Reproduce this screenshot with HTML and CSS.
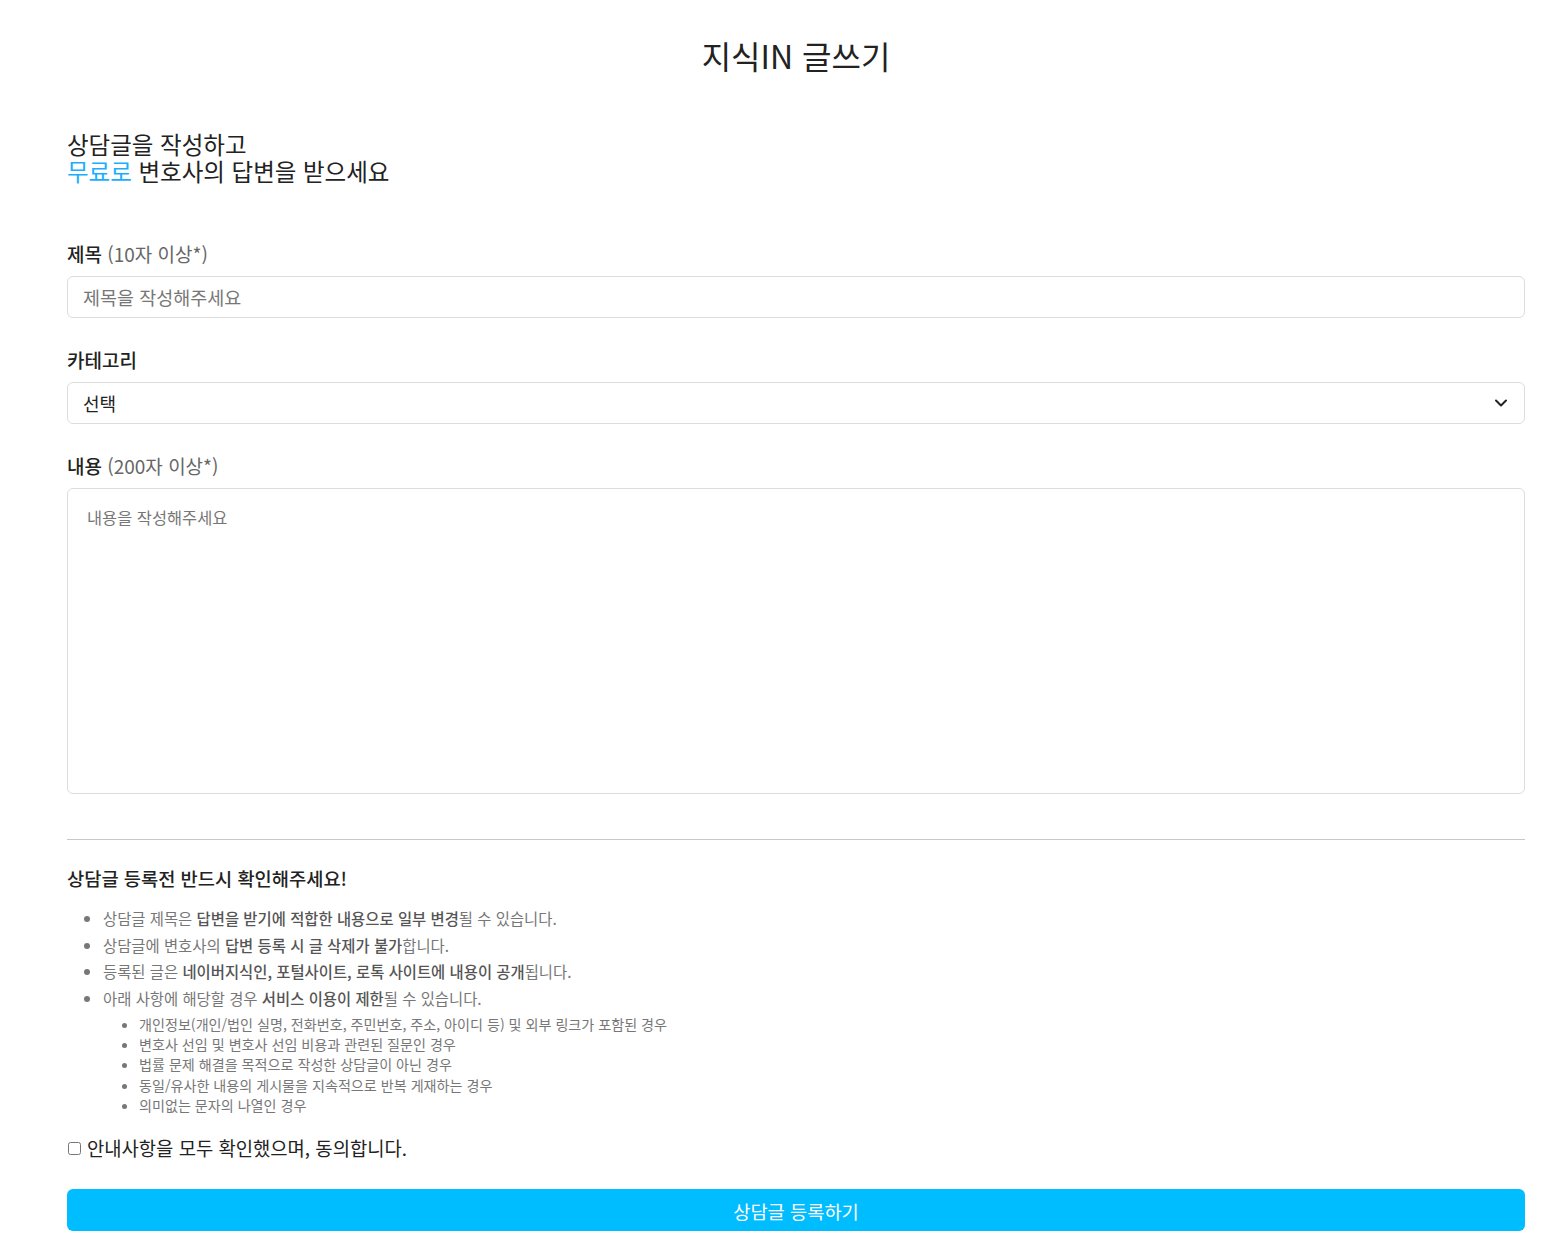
FILE: index.html
```html
<!DOCTYPE html>
<html lang="ko">
<head>
<meta charset="utf-8">
<title>지식IN 글쓰기</title>
<link rel="stylesheet" href="styles.css">
</head>
<body>
<div class="page">
  <h1 class="title">지식IN 글쓰기</h1>
  <h2 class="intro"><span class="line">상담글을 작성하고</span><span class="line"><span class="blue">무료로</span> 변호사의 답변을 받으세요</span></h2>

  <div class="field">
    <label class="label">제목 <span class="hint">(10자 이상*)</span></label>
    <input class="input" type="text" placeholder="제목을 작성해주세요">
  </div>

  <div class="field">
    <label class="label">카테고리</label>
    <div class="select">
      <span>선택</span>
      <svg class="chev" width="14" height="10" viewBox="0 0 14 10"><path d="M2 2.5 L7 7.5 L12 2.5" fill="none" stroke="#222" stroke-width="2" stroke-linecap="round" stroke-linejoin="round"/></svg>
    </div>
  </div>

  <div class="field">
    <label class="label">내용 <span class="hint">(200자 이상*)</span></label>
    <textarea class="textarea" placeholder="내용을 작성해주세요"></textarea>
  </div>

  <hr class="divider">

  <h3 class="notice-title">상담글 등록전 반드시 확인해주세요!</h3>
  <ul class="notice">
    <li>상담글 제목은 <b>답변을 받기에 적합한 내용으로 일부 변경</b>될 수 있습니다.</li>
    <li>상담글에 변호사의 <b>답변 등록 시 글 삭제가 불가</b>합니다.</li>
    <li>등록된 글은 <b>네이버지식인, 포털사이트, 로톡 사이트에 내용이 공개</b>됩니다.</li>
    <li>아래 사항에 해당할 경우 <b>서비스 이용이 제한</b>될 수 있습니다.
      <ul class="sub">
        <li>개인정보(개인/법인 실명, 전화번호, 주민번호, 주소, 아이디 등) 및 외부 링크가 포함된 경우</li>
        <li>변호사 선임 및 변호사 선임 비용과 관련된 질문인 경우</li>
        <li>법률 문제 해결을 목적으로 작성한 상담글이 아닌 경우</li>
        <li>동일/유사한 내용의 게시물을 지속적으로 반복 게재하는 경우</li>
        <li>의미없는 문자의 나열인 경우</li>
      </ul>
    </li>
  </ul>

  <label class="agree"><input type="checkbox" class="check"> 안내사항을 모두 확인했으며, 동의합니다.</label>

  <button class="submit" type="button">상담글 등록하기</button>
</div>
</body>
</html>
```

FILE: styles.css
```css
* { box-sizing: border-box; }
body {
  margin: 0;
  background: #fff;
  font-family: "Noto Sans CJK KR", "Noto Sans", sans-serif;
  color: #222;
}
.page {
  margin-left: 67px;
  width: 1458px;
  padding-top: 37px;
  padding-bottom: 27px;
}
.title {
  margin: 0;
  text-align: center;
  font-size: 32px;
  line-height: 36px;
  font-weight: 400;
  color: #222;
}
.intro {
  margin: 58px 0 0;
  font-size: 23.5px;
  line-height: 27px;
  font-weight: 400;
  color: #222;
}
.line { display: block; height: 27px; }
.blue { color: #1aaeff; }
.field { display: flex; flex-direction: column; }
.intro + .field { margin-top: 58px; }
.field + .field { margin-top: 31px; }
.label {
  font-size: 19px;
  line-height: 22px;
  font-weight: 500;
  color: #222;
  margin-bottom: 11px;
}
.hint { font-weight: 400; color: #666; }
.input, .select {
  height: 42px;
  border: 1px solid #dcdcdc;
  border-radius: 6px;
  padding: 0 15px;
  font-family: inherit;
  font-size: 18.5px;
  color: #222;
  outline: none;
  width: 100%;
}
.select { font-size: 18px; }
.input::placeholder { color: #777; }
.select {
  display: flex;
  align-items: center;
  justify-content: space-between;
  padding-right: 16px;
}
.textarea {
  height: 306px;
  border: 1px solid #dcdcdc;
  border-radius: 6px;
  padding: 18px 19px;
  font-family: inherit;
  font-size: 16.4px;
  line-height: 20px;
  resize: none;
  width: 100%;
  outline: none;
}
.textarea::placeholder { color: #777; }
.divider {
  margin: 45px 0 0;
  border: 0;
  border-top: 1px solid #c8c8c8;
}
.notice-title {
  margin: 26px 0 0;
  font-size: 18.7px;
  line-height: 24px;
  font-weight: 500;
  color: #222;
}
.notice {
  margin: 15px 0 0;
  padding-left: 36px;
  font-size: 15.4px;
  line-height: 26.7px;
  color: #777;
}
.notice b { font-weight: 500; color: #555; }
.sub {
  margin: 2px 0 0;
  padding-left: 36px;
  font-size: 14.1px;
  line-height: 20.3px;
  color: #777;
  list-style-type: disc;
}
.agree {
  display: flex;
  align-items: center;
  margin-top: 21px;
  font-size: 18.8px;
  line-height: 24px;
  color: #222;
}
.check {
  margin: 0 6px 0 1px;
  width: 13px;
  height: 13px;
}
.submit {
  display: block;
  margin-top: 29px;
  width: 100%;
  height: 42px;
  border: 0;
  border-radius: 6px;
  background: #00bdff;
  color: #fff;
  font-family: inherit;
  font-size: 18.7px;
}
```
